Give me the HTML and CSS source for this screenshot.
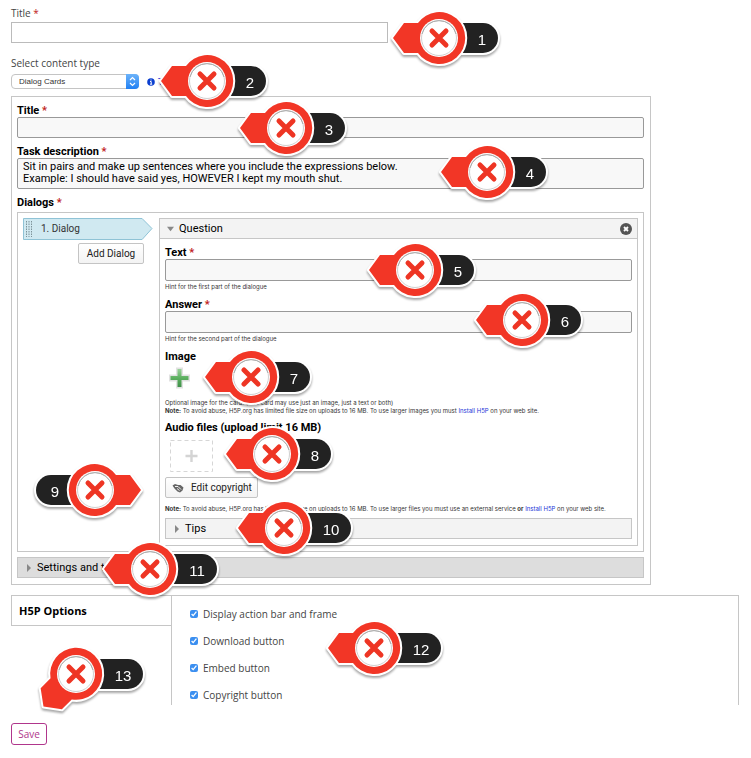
FILE: index.html
```html
<!DOCTYPE html>
<html lang="en">
<head>
<meta charset="utf-8">
<title>Dialog Cards editor</title>
<link rel="stylesheet" href="styles.css">
</head>
<body>
<svg class="defs" aria-hidden="true">
  <defs>
    <linearGradient id="leaf" x1="0" y1="0" x2="0" y2="1"><stop offset="0" stop-color="#9ad29a"/><stop offset=".5" stop-color="#5cb060"/><stop offset="1" stop-color="#3f9049"/></linearGradient>
    <g id="ring">
      <circle r="19" fill="#fff"/>
      <circle r="17.500" fill="none" stroke="#d0d0d0" stroke-width="1"/>
      <path d="M-17 -4A17.500 17.500 0 0 1 17 -4" fill="none" stroke="#aaa" stroke-width="1"/>
      <path d="M-7 -7L7 7M7 -7L-7 7" stroke="#ee3524" stroke-width="5" stroke-linecap="round"/>
    </g>
    <g id="head">
      <path d="M-46 0L-35 -15H-21A26 26 0 1 1 -21 15H-35Z" fill="#f23626" stroke="#fff" stroke-width="4" paint-order="stroke" stroke-linejoin="round"/>
    </g>
    <path id="pill" d="M0 -15H44A15 15 0 0 1 44 15H0Z" fill="#222" stroke="#fff" stroke-width="4" paint-order="stroke"/>
    <path id="pill-wide" d="M0 -15H52A15 15 0 0 1 52 15H0Z" fill="#222" stroke="#fff" stroke-width="4" paint-order="stroke"/>
  </defs>
</svg>
<main class="page">
  <form class="form">
    <div class="node-title">
      <label for="node-title">Title <span class="req">*</span></label>
      <input id="node-title" type="text">
    </div>

    <div class="content-type">
      <label for="type">Select content type</label>
      <div class="type-row">
        <span class="select">
          <select id="type"><option>Dialog Cards</option></select>
          <svg class="stepper" viewBox="0 0 13 15" aria-hidden="true"><path d="M4 6L6.500 3.500L9 6M4 9L6.500 11.500L9 9" fill="none" stroke="#fff" stroke-width="1.200"/></svg>
        </span>
        <a class="tutorial" href="#tutorial"><svg viewBox="0 0 8 8" aria-hidden="true"><circle cx="4" cy="4" r="3.800" fill="#0b3fd0"/><path d="M4 1.500V2.500M3 3.500H4.200V6M3 6.200H5.200" stroke="#fff" fill="none"/></svg>Tutorial</a>
      </div>
    </div>

    <section class="editor">
      <div class="field">
        <label for="title">Title <span class="req">*</span></label>
        <input id="title" type="text">
      </div>
      <div class="field">
        <label for="task">Task description <span class="req">*</span></label>
        <textarea id="task">Sit in pairs and make up sentences where you include the expressions below.
Example: I should have said yes, HOWEVER I kept my mouth shut.</textarea>
      </div>
      <div class="field">
        <h2>Dialogs <span class="req">*</span></h2>
        <div class="dialogs">
          <div class="tabs">
            <button type="button" class="tab">
              <svg class="tab-shape" viewBox="0 0 131 22" preserveAspectRatio="none" aria-hidden="true"><path d="M.5 .5H120L130 10.500L120 21.500H.5Z" fill="#d0e9f1"/><path d="M120 21.500H.5V.5H120L130 10.500L120 21.500" fill="none" stroke="#8fc3d6"/></svg>
              <svg class="grip" viewBox="0 0 6 16" aria-hidden="true"><path d="M.5 0V16M3 0V16M5.500 0V16" stroke="#7d9299" stroke-dasharray="1.500 1"/></svg>
              <span>1. Dialog</span>
            </button>
            <button type="button" class="btn add">Add Dialog</button>
          </div>
          <div class="group">
            <div class="group-head">
              <svg class="tri" viewBox="0 0 8 6" aria-hidden="true"><path d="M0 .5H8L4 5.500Z" fill="#888"/></svg>
              <span>Question</span>
              <button type="button" class="remove" aria-label="Remove dialog"><svg viewBox="0 0 12 12" aria-hidden="true"><circle cx="6" cy="6" r="6" fill="#555"/><path d="M4 4L8 8M8 4L4 8" stroke="#fff" stroke-width="1.800"/></svg></button>
            </div>
            <div class="group-body">
              <div class="item">
                <label for="text">Text <span class="req">*</span></label>
                <input id="text" type="text">
                <p class="hint">Hint for the first part of the dialogue</p>
              </div>
              <div class="item">
                <label for="answer">Answer <span class="req">*</span></label>
                <input id="answer" type="text">
                <p class="hint">Hint for the second part of the dialogue</p>
              </div>
              <div class="item">
                <h3>Image</h3>
                <button type="button" class="add-image" aria-label="Add image"><svg viewBox="0 0 24 24" aria-hidden="true"><path d="M9.500 3H13.500V10H20.500V14H13.500V21H9.500V14H2.500V10H9.500Z" fill="url(#leaf)" stroke="#e2e2e2" stroke-width="3" paint-order="stroke"/></svg></button>
                <p class="note">Optional image for the card. (The card may use just an image, just a text or both)<br><b>Note:</b> To avoid abuse, H5P.org has limited file size on uploads to 16 MB. To use larger images you must <a href="#install">Install H5P</a> on your web site.</p>
              </div>
              <div class="item">
                <h3>Audio files (upload limit 16 MB)</h3>
                <button type="button" class="add-audio" aria-label="Add audio file"><svg viewBox="0 0 43 32" aria-hidden="true"><rect x=".5" y=".5" width="42" height="31" fill="none" stroke="#d6d6d6" stroke-dasharray="4 3"/><path d="M21.500 10V22M15.500 16H27.500" stroke="#d4d4d4" stroke-width="2.400"/></svg></button>
                <button type="button" class="btn copyright"><svg viewBox="0 0 12 10" aria-hidden="true"><path d="M.5 2.500L3 1L6 2L8.500 2L11.500 4.500L10.500 7.500L8 9.500L5.500 8.500L2.500 5.500Z" fill="#666"/><path d="M3 3.500L6 3.500L9 6.500M5 5.500L7.500 7.500" stroke="#fff" fill="none" stroke-width=".9"/></svg>Edit copyright</button>
                <p class="note upload-note"><b>Note:</b> To avoid abuse, H5P.org has limited file size on uploads to 16 MB. To use larger files you must use an external service <b>or</b> <a href="#install">Install H5P</a> on your web site.</p>
              </div>
              <button type="button" class="fold tips"><svg viewBox="0 0 4 8" aria-hidden="true"><path d="M0 0L4 4L0 8Z" fill="#888"/></svg>Tips</button>
            </div>
          </div>
        </div>
      </div>
      <button type="button" class="fold settings"><svg viewBox="0 0 4 8" aria-hidden="true"><path d="M0 0L4 4L0 8Z" fill="#888"/></svg>Settings and texts</button>
    </section>

    <section class="options">
      <h2 class="options-tab">H5P Options</h2>
      <div class="options-body">
        <label><input type="checkbox" checked>Display action bar and frame</label>
        <label><input type="checkbox" checked>Download button</label>
        <label><input type="checkbox" checked>Embed button</label>
        <label><input type="checkbox" checked>Copyright button</label>
      </div>
    </section>
    <button type="submit" class="save">Save</button>
  </form>

  <svg class="pins" aria-hidden="true">
    <g transform="translate(439 38)"><use href="#pill"/><use href="#head"/><use href="#ring"/><text x="43" y="7">1</text></g>
    <g transform="translate(207 81)"><use href="#pill"/><use href="#head"/><use href="#ring"/><text x="43" y="7">2</text></g>
    <g transform="translate(286 128)"><use href="#pill"/><use href="#head"/><use href="#ring"/><text x="43" y="7">3</text></g>
    <g transform="translate(487 172)"><use href="#pill"/><use href="#head"/><use href="#ring"/><text x="43" y="7">4</text></g>
    <g transform="translate(415 270)"><use href="#pill"/><use href="#head"/><use href="#ring"/><text x="43" y="7">5</text></g>
    <g transform="translate(522 320)"><use href="#pill"/><use href="#head"/><use href="#ring"/><text x="43" y="7">6</text></g>
    <g transform="translate(251 377)"><use href="#pill"/><use href="#head"/><use href="#ring"/><text x="43" y="7">7</text></g>
    <g transform="translate(272 454)"><use href="#pill"/><use href="#head"/><use href="#ring"/><text x="43" y="7">8</text></g>
    <g transform="translate(95 490)"><use href="#pill" transform="rotate(180)"/><use href="#head" transform="rotate(180)"/><use href="#ring"/><text x="-40" y="7">9</text></g>
    <g transform="translate(284 528)"><use href="#pill-wide"/><use href="#head"/><use href="#ring"/><text x="47" y="7">10</text></g>
    <g transform="translate(150 569)"><use href="#pill-wide"/><use href="#head"/><use href="#ring"/><text x="47" y="7">11</text></g>
    <g transform="translate(374 648)"><use href="#pill-wide"/><use href="#head"/><use href="#ring"/><text x="47" y="7">12</text></g>
    <g transform="translate(76 674)"><use href="#pill-wide"/><use href="#head" transform="rotate(-45)"/><use href="#ring"/><text x="47" y="7">13</text></g>
  </svg>
</main>
</body>
</html>
```
FILE: styles.css
```css
* { box-sizing: border-box; }

body {
  margin: 0;
  background: #fff;
  color: #000;
  font: 11px/14px Roboto, "Liberation Sans", Arial, sans-serif;
}

button, input, select, textarea { font: inherit; color: inherit; margin: 0; }
button { padding: 0; border: 0; background: none; }
svg { display: block; }
h2, h3, p { margin: 0; font-size: inherit; }
a { color: #1a35d8; text-decoration: none; }
.defs { position: absolute; width: 0; height: 0; }
.req { color: #c02020; }

.page { position: relative; }
.form { padding: 6px 12px 12px 11px; }

.node-title, .content-type {
  color: #444;
  font-family: "Open Sans", sans-serif;
  font-size: 10px;
}
.node-title label, .content-type label { display: block; }
.node-title input {
  display: block;
  width: 52%;
  max-width: 377px;
  height: 21px;
  margin-top: 2px;
  border: 1px solid #bbb;
  background: #fff;
}
.content-type { margin-top: 13px; }
.type-row { display: flex; align-items: center; gap: 8px; margin-top: 4px; }
.select { position: relative; width: 128px; }
.select select {
  display: block;
  width: 100%;
  height: 15px;
  padding: 0 7px;
  border: 1px solid #c4c4c4;
  border-radius: 4px;
  background: #fff;
  color: #333;
  font: 8px/13px "Liberation Sans", Arial, sans-serif;
  appearance: none;
}
.stepper {
  position: absolute;
  top: 0;
  right: 0;
  width: 13px;
  height: 15px;
  border-radius: 0 4px 4px 0;
  background: linear-gradient(#6cb3fa, #2180f3);
  pointer-events: none;
}
.tutorial { display: flex; align-items: center; gap: 3px; font-size: 9px; line-height: 10px; }
.tutorial svg { width: 8px; height: 8px; }

.editor {
  max-width: 640px;
  margin-top: 7px;
  padding: 6px 6px 6px 5px;
  border: 1px solid #c6c6c6;
}
.field { margin-bottom: 5px; }
.field > label, .item > label, h2, h3 { display: block; font-weight: bold; }
.field > label, .field > h2, .item > label, h3 { padding-top: 2px; line-height: 12px; }
.field > input, .field > textarea, .item > input {
  display: block;
  width: 100%;
  height: 21px;
  padding: 0 5px;
  border: 1px solid #999;
  border-radius: 2px;
  background: #f8f8f8;
}
.field > input, .field > textarea { margin-bottom: 6px; }
.field > textarea { height: 31px; padding-top: 2px; line-height: 12px; resize: none; overflow: hidden; }
.field:has(> input), .field:has(> textarea) { margin-bottom: 0; }

.dialogs {
  display: flex;
  gap: 6px;
  min-height: 340px;
  margin-top: 3px;
  padding: 5px;
  border: 1px solid #c6c6c6;
}
.tabs { display: flex; flex: 0 0 130px; flex-direction: column; align-items: flex-end; gap: 3px; }
.tab { position: relative; width: 100%; height: 22px; padding-left: 18px; color: #333; font-size: 10px; line-height: 20px; text-align: left; }
.tab-shape { position: absolute; inset: 0; width: 100%; height: 100%; }
.grip { position: absolute; top: 3px; left: 3px; width: 6px; height: 16px; }
.tab span { position: relative; }
.btn {
  height: 21px;
  border: 1px solid #c4c4c4;
  border-radius: 2px;
  background: linear-gradient(#fff, #f3f3f3);
  color: #222;
  font-size: 10px;
  line-height: 18px;
}
.add { width: 66px; margin-right: 9px; }

.group { flex: 1; min-width: 0; border: 1px solid #c6c6c6; }
.group-head {
  display: flex;
  align-items: center;
  height: 20px;
  padding: 0 5px 0 7px;
  gap: 5px;
  border-bottom: 1px solid #c6c6c6;
  background: #f3f3f3;
}
.tri { width: 7px; height: 6px; }
.remove { width: 12px; height: 12px; margin-left: auto; }
.group-body { padding: 6px 5px 5px; }
.item { margin-bottom: 5px; }
.item > input { height: 22px; }
.hint, .note { color: #333; font-family: Inter, sans-serif; font-size: 6px; }
.hint { line-height: 11px; }
.note { line-height: 8px; }
.add-image { display: block; width: 24px; height: 24px; margin: 3px 0 9px 3px; }
.add-audio { display: block; width: 43px; height: 32px; margin: 6px 0 5px 5px; }
.copyright { display: flex; align-items: center; gap: 7px; width: 93px; padding: 0 0 0 6px; }
.copyright svg { width: 12px; height: 10px; }
.upload-note { margin-top: 7px; }
.fold {
  display: flex;
  align-items: center;
  gap: 6px;
  width: 100%;
  height: 21px;
  padding: 0 9px;
  border: 1px solid #c6c6c6;
  background: #f3f3f3;
  text-align: left;
}
.fold svg { width: 4px; height: 8px; }
.settings { background: #ddd; }

.options { display: flex; margin-top: 10px; font-family: "Open Sans", sans-serif; }
.options-tab {
  flex: 0 0 160px;
  height: 31px;
  padding: 0 7px;
  border: 1px solid #c6c6c6;
  border-right: 0;
  line-height: 29px;
}
.options-body {
  display: flex;
  flex: 1;
  flex-direction: column;
  gap: 13px;
  height: 110px;
  padding: 11px 18px 0;
  border: 1px solid #c6c6c6;
  border-bottom: 0;
  color: #444;
  font-size: 10px;
}
.options-body label { display: flex; align-items: center; gap: 5px; }
.options-body input { width: 8px; height: 8px; accent-color: #3b8ff0; }
.save {
  display: block;
  width: 36px;
  height: 22px;
  margin-top: 18px;
  border: 1px solid #b0368c;
  border-radius: 3px;
  color: #b0368c;
  font-family: "Open Sans", sans-serif;
  font-size: 10px;
}

/* Numbered callouts laid over the form */
.pins {
  position: absolute;
  inset: 0;
  width: 100%;
  height: 100%;
  overflow: visible;
  pointer-events: none;
}
.pins g { filter: drop-shadow(0 2px 1px rgba(0, 0, 0, .35)); }
.pins text { fill: #fff; font-family: "Liberation Sans", Arial, sans-serif; font-size: 15px; text-anchor: middle; }
```
